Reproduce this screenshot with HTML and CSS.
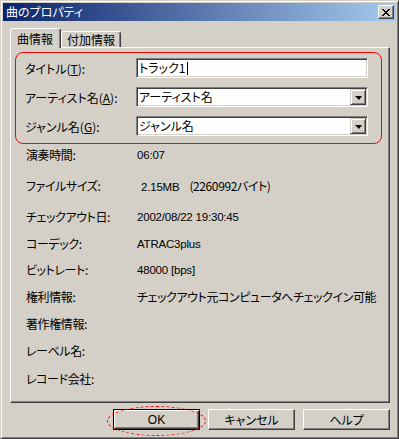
FILE: index.html
```html
<!DOCTYPE html>
<html lang="ja">
<head>
    <meta charset="UTF-8">
    <title>曲のプロパティ</title>
    <link rel="stylesheet" href="styles.css">
</head>
<body>

    <div class="window">
        <div class="titlebar">
            <span class="title">曲のプロパティ</span>
            <button class="close-btn">
                <svg width="8" height="7" viewBox="0 0 8 7" shape-rendering="crispEdges">
                    <path d="M0 0h2v1h-2zM6 0h2v1h-2zM1 1h2v1h-2zM5 1h2v1h-2zM2 2h4v1h-4zM3 3h2v1h-2zM2 4h4v1h-4zM1 5h2v1h-2zM5 5h2v1h-2zM0 6h2v1h-2zM6 6h2v1h-2z" fill="#000"/>
                </svg>
            </button>
        </div>

        <div class="content">
            <div class="tabs">
                <div class="tab active">曲情報</div>
                <div class="tab">付加情報</div>
            </div>

            <div class="panel">
                <div class="group">
                    <label class="label">タイトル(<u>T</u>):</label>
                    <div class="field"><span>トラック1</span><span class="caret"></span></div>

                    <label class="label">アーティスト名(<u>A</u>):</label>
                    <div class="field select">
                        <span>アーティスト名</span>
                        <span class="drop-btn"><span class="arrow"></span></span>
                    </div>

                    <label class="label">ジャンル名(<u>G</u>):</label>
                    <div class="field select">
                        <span>ジャンル名</span>
                        <span class="drop-btn"><span class="arrow"></span></span>
                    </div>
                </div>

                <div class="info">
                    <div>演奏時間:</div><div class="num">06:07</div>
                    <div>ファイルサイズ:</div><div><span class="size">2.15MB</span><span class="bytes">(2260992バイト)</span></div>
                    <div>チェックアウト日:</div><div class="num">2002/08/22 19:30:45</div>
                    <div>コーデック:</div><div class="num">ATRAC3plus</div>
                    <div>ビットレート:</div><div class="num">48000 [bps]</div>
                    <div>権利情報:</div><div>チェックアウト元コンピュータへチェックイン可能</div>
                    <div>著作権情報:</div><div></div>
                    <div>レーベル名:</div><div></div>
                    <div>レコード会社:</div><div></div>
                </div>
            </div>

            <div class="buttons">
                <button class="btn default">OK<span class="mark"></span></button>
                <button class="btn">キャンセル</button>
                <button class="btn">ヘルプ</button>
            </div>
        </div>
    </div>

</body>
</html>
```

FILE: styles.css
```css
body {
    margin: 0;
    padding: 0;
    background: #d4d0c8;
    font-family: "Noto Sans CJK JP", sans-serif;
    font-size: 12px;
    font-feature-settings: "palt";
    color: #000;
}
.window {
    width: 399px;
    height: 439px;
    box-sizing: border-box;
    background: #d4d0c8;
    border: 1px solid;
    border-color: #d4d0c8 #404040 #404040 #d4d0c8;
    box-shadow: inset 1px 1px #fff, inset -1px -1px #808080;
    padding: 2px;
}
.titlebar {
    height: 18px;
    display: flex;
    align-items: center;
    justify-content: space-between;
    padding: 0 2px 0 2px;
    background: linear-gradient(to right, #0a246a, #a6caf0);
}
.title {
    color: #fff;
    font-size: 12px;
    line-height: 18px;
    padding-left: 1px;
}
.close-btn {
    width: 16px;
    height: 14px;
    padding: 0;
    display: flex;
    align-items: center;
    justify-content: center;
    background: #d4d0c8;
    border: 1px solid;
    border-color: #fff #404040 #404040 #fff;
    box-shadow: inset -1px -1px #808080;
}
.content {
    padding: 7px 6px 0 7px;
}
.tabs {
    display: flex;
    align-items: flex-end;
    height: 19px;
}
.tab {
    height: 16px;
    line-height: 16px;
    box-sizing: border-box;
    padding: 0 5px 0 5px;
    border: 1px solid;
    border-bottom: none;
    border-color: #fff #404040 transparent #fff;
    border-radius: 3px 3px 0 0;
    box-shadow: inset -1px 0 #808080;
    font-size: 12px;
}
.tab.active {
    height: 20px;
    line-height: 19px;
    padding: 0 6px 0 6px;
    margin-bottom: -1px;
    position: relative;
    z-index: 1;
    background: #d4d0c8;
    width: 51px;
}
.panel {
    width: 380px;
    height: 356px;
    box-sizing: border-box;
    border: 1px solid;
    border-color: #fff #404040 #404040 #fff;
    box-shadow: inset -1px -1px #808080;
    padding: 4px 0 0 4px;
}
.group {
    width: 367px;
    box-sizing: border-box;
    border: 1px solid #ff0000;
    border-radius: 8px;
    padding: 5px 0 7px 9px;
    display: grid;
    grid-template-columns: 111px 232px;
    grid-auto-rows: 20px;
    row-gap: 9px;
    align-items: center;
}
.label u {
    text-decoration: underline;
    text-underline-offset: 1px;
}
.field {
    height: 20px;
    box-sizing: border-box;
    background: #fff;
    border: 1px solid;
    border-color: #808080 #fff #fff #808080;
    box-shadow: inset 1px 1px #404040, inset -1px -1px #d4d0c8;
    padding: 0 1px 0 2px;
    display: flex;
    align-items: center;
    line-height: 16px;
}
.caret {
    width: 1px;
    height: 13px;
    background: #000;
    margin-left: 1px;
}
.select {
    justify-content: space-between;
    padding-right: 1px;
}
.drop-btn {
    width: 16px;
    height: 16px;
    box-sizing: border-box;
    background: #d4d0c8;
    border: 1px solid;
    border-color: #d4d0c8 #404040 #404040 #d4d0c8;
    box-shadow: inset 1px 1px #fff, inset -1px -1px #808080;
    display: flex;
    align-items: center;
    justify-content: center;
}
.arrow {
    width: 0;
    height: 0;
    border-left: 4px solid transparent;
    border-right: 3px solid transparent;
    border-top: 4px solid #000;
    margin-top: 1px;
}
.info {
    display: grid;
    grid-template-columns: 111px auto;
    grid-template-rows: 31px 31px 27px 26px 27px 27px 27px 28px 16px;
    margin-top: 3px;
    padding-left: 11px;
    line-height: 16px;
    letter-spacing: -0.4px;
}
.num {
    font-family: "Liberation Sans", sans-serif;
    font-size: 11.5px;
    letter-spacing: -0.2px;
}
.size {
    font-family: "Liberation Sans", sans-serif;
    font-size: 11.5px;
    letter-spacing: -0.2px;
    margin-left: 4px;
}
.bytes {
    margin-left: 10px;
}
.buttons {
    display: flex;
    justify-content: flex-end;
    gap: 8px;
    margin-top: 6px;
}
.btn {
    width: 87px;
    height: 21px;
    padding: 0;
    background: #d4d0c8;
    font-family: "Noto Sans CJK JP", sans-serif;
    font-size: 12px;
    font-feature-settings: "palt";
    color: #000;
    border: 1px solid;
    border-color: #fff #404040 #404040 #fff;
    box-shadow: inset -1px -1px #808080;
}
.btn.default {
    position: relative;
    border-color: #000;
    box-shadow: inset 1px 1px #fff, inset -1px -1px #404040, inset -2px -2px #808080;
    font-family: "Liberation Sans", sans-serif;
}
.mark {
    position: absolute;
    left: -7px;
    top: -4px;
    width: 97px;
    height: 28px;
    border: 1px dashed #ff0000;
    border-radius: 50%;
}
```
